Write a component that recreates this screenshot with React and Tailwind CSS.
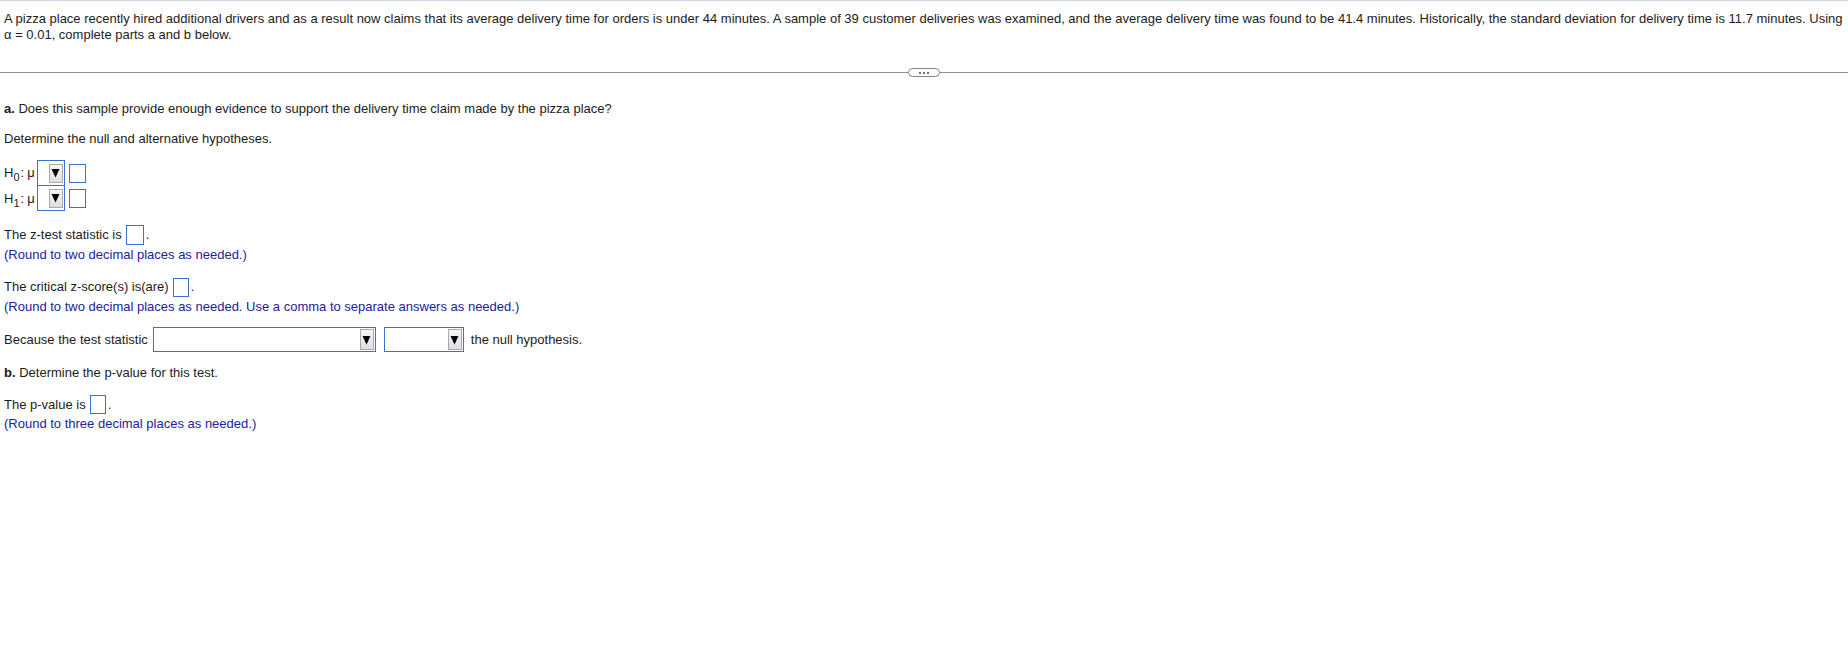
import React from "react";

function Arrow({ h = "h-[19px]" }) {
  return (
    <div className={`flex w-[14px] ${h} items-center justify-center border border-[#a9a9a9] bg-gradient-to-b from-[#f7f7f7] to-[#dedede]`}>
      <svg width="9" height="10" viewBox="0 0 9 10">
        <polygon points="0.5,1 8.5,1 4.5,9.5" fill="#000" />
      </svg>
    </div>
  );
}

function Box({ w = "w-[17px]", h = "h-[19px]" }) {
  return <div className={`${w} ${h} border border-[#3b6fd1] bg-white`} />;
}

function HypRow({ sub, top }) {
  return (
    <div className="flex items-center">
      <div className="mr-[2px] flex items-center whitespace-nowrap">
        <span>H</span>
        <span className="relative top-[4px] text-[11px]">{sub}</span>
        <span className="ml-[1px]">:</span>
        <span className="ml-[3px]">μ</span>
      </div>
      <div className={`flex h-[26px] w-[28px] items-center justify-end border border-[#3b6fd1] pr-[1px] ${top ? "" : "-mt-px"}`}>
        <Arrow />
      </div>
      <div className="ml-[4px]">
        <Box />
      </div>
    </div>
  );
}

export default function App() {
  return (
    <div className="min-h-[657px] bg-white font-['Liberation_Sans',Arial,sans-serif] text-[13px] leading-4 text-[#1c1c1c]">
      <div className="border-t border-[#cfd5df] pl-[4px] pr-[2px] pt-[10px]">
        A pizza place recently hired additional drivers and as a result now claims that its average delivery time for orders is under 44 minutes. A sample of 39 customer deliveries was examined, and the average delivery time was found to be 41.4 minutes. Historically, the standard deviation for delivery time is 11.7 minutes. Using α = 0.01, complete parts a and b below.
      </div>

      <div className="relative mt-[29px] h-px bg-[#8b909b]">
        <div className="absolute left-1/2 top-[-4px] flex h-[9px] w-[32px] -translate-x-1/2 items-center justify-center gap-[2px] rounded-full border border-[#7d8391] bg-white">
          <span className="h-[2px] w-[2px] bg-[#6d7380]" />
          <span className="h-[2px] w-[2px] bg-[#6d7380]" />
          <span className="h-[2px] w-[2px] bg-[#6d7380]" />
        </div>
      </div>

      <div className="px-[4px]">
        <div className="mt-[28px]">
          <span className="font-bold">a.</span> Does this sample provide enough evidence to support the delivery time claim made by the pizza place?
        </div>
        <div className="mt-[14px]">Determine the null and alternative hypotheses.</div>

        <div className="mt-[13px] flex flex-col">
          <HypRow sub="0" top />
          <HypRow sub="1" />
        </div>

        <div className="mt-[14px] flex h-[20px] items-center">
          <span>The z-test statistic is</span>
          <div className="ml-[4px]">
            <Box w="w-[18px]" h="h-[20px]" />
          </div>
          <span className="ml-[2px]">.</span>
        </div>
        <div className="mt-[2px] text-[#22229a]">(Round to two decimal places as needed.)</div>

        <div className="mt-[14px] flex h-[20px] items-center">
          <span>The critical z-score(s) is(are)</span>
          <div className="ml-[4px]">
            <Box w="w-[16px]" h="h-[19px]" />
          </div>
          <span className="ml-[2px]">.</span>
        </div>
        <div className="mt-[2px] text-[#22229a]">
          (Round to two decimal places as needed. Use a comma to separate answers as needed.)
        </div>

        <div className="mt-[12px] flex items-center">
          <span>Because the test statistic</span>
          <div className="ml-[5px] flex h-[25px] w-[223px] items-center justify-end border border-[#3b6fd1] pr-[1px]">
            <Arrow h="h-[21px]" />
          </div>
          <div className="ml-[8px] flex h-[25px] w-[80px] items-center justify-end border border-[#3b6fd1] pr-[1px]">
            <Arrow h="h-[21px]" />
          </div>
          <span className="ml-[7px]">the null hypothesis.</span>
        </div>

        <div className="mt-[13px]">
          <span className="font-bold">b.</span> Determine the p-value for this test.
        </div>

        <div className="mt-[14px] flex h-[19px] items-center">
          <span>The p-value is</span>
          <div className="ml-[4px]">
            <Box w="w-[16px]" h="h-[19px]" />
          </div>
          <span className="ml-[2px]">.</span>
        </div>
        <div className="mt-[2px] text-[#22229a]">(Round to three decimal places as needed.)</div>
      </div>
    </div>
  );
}
